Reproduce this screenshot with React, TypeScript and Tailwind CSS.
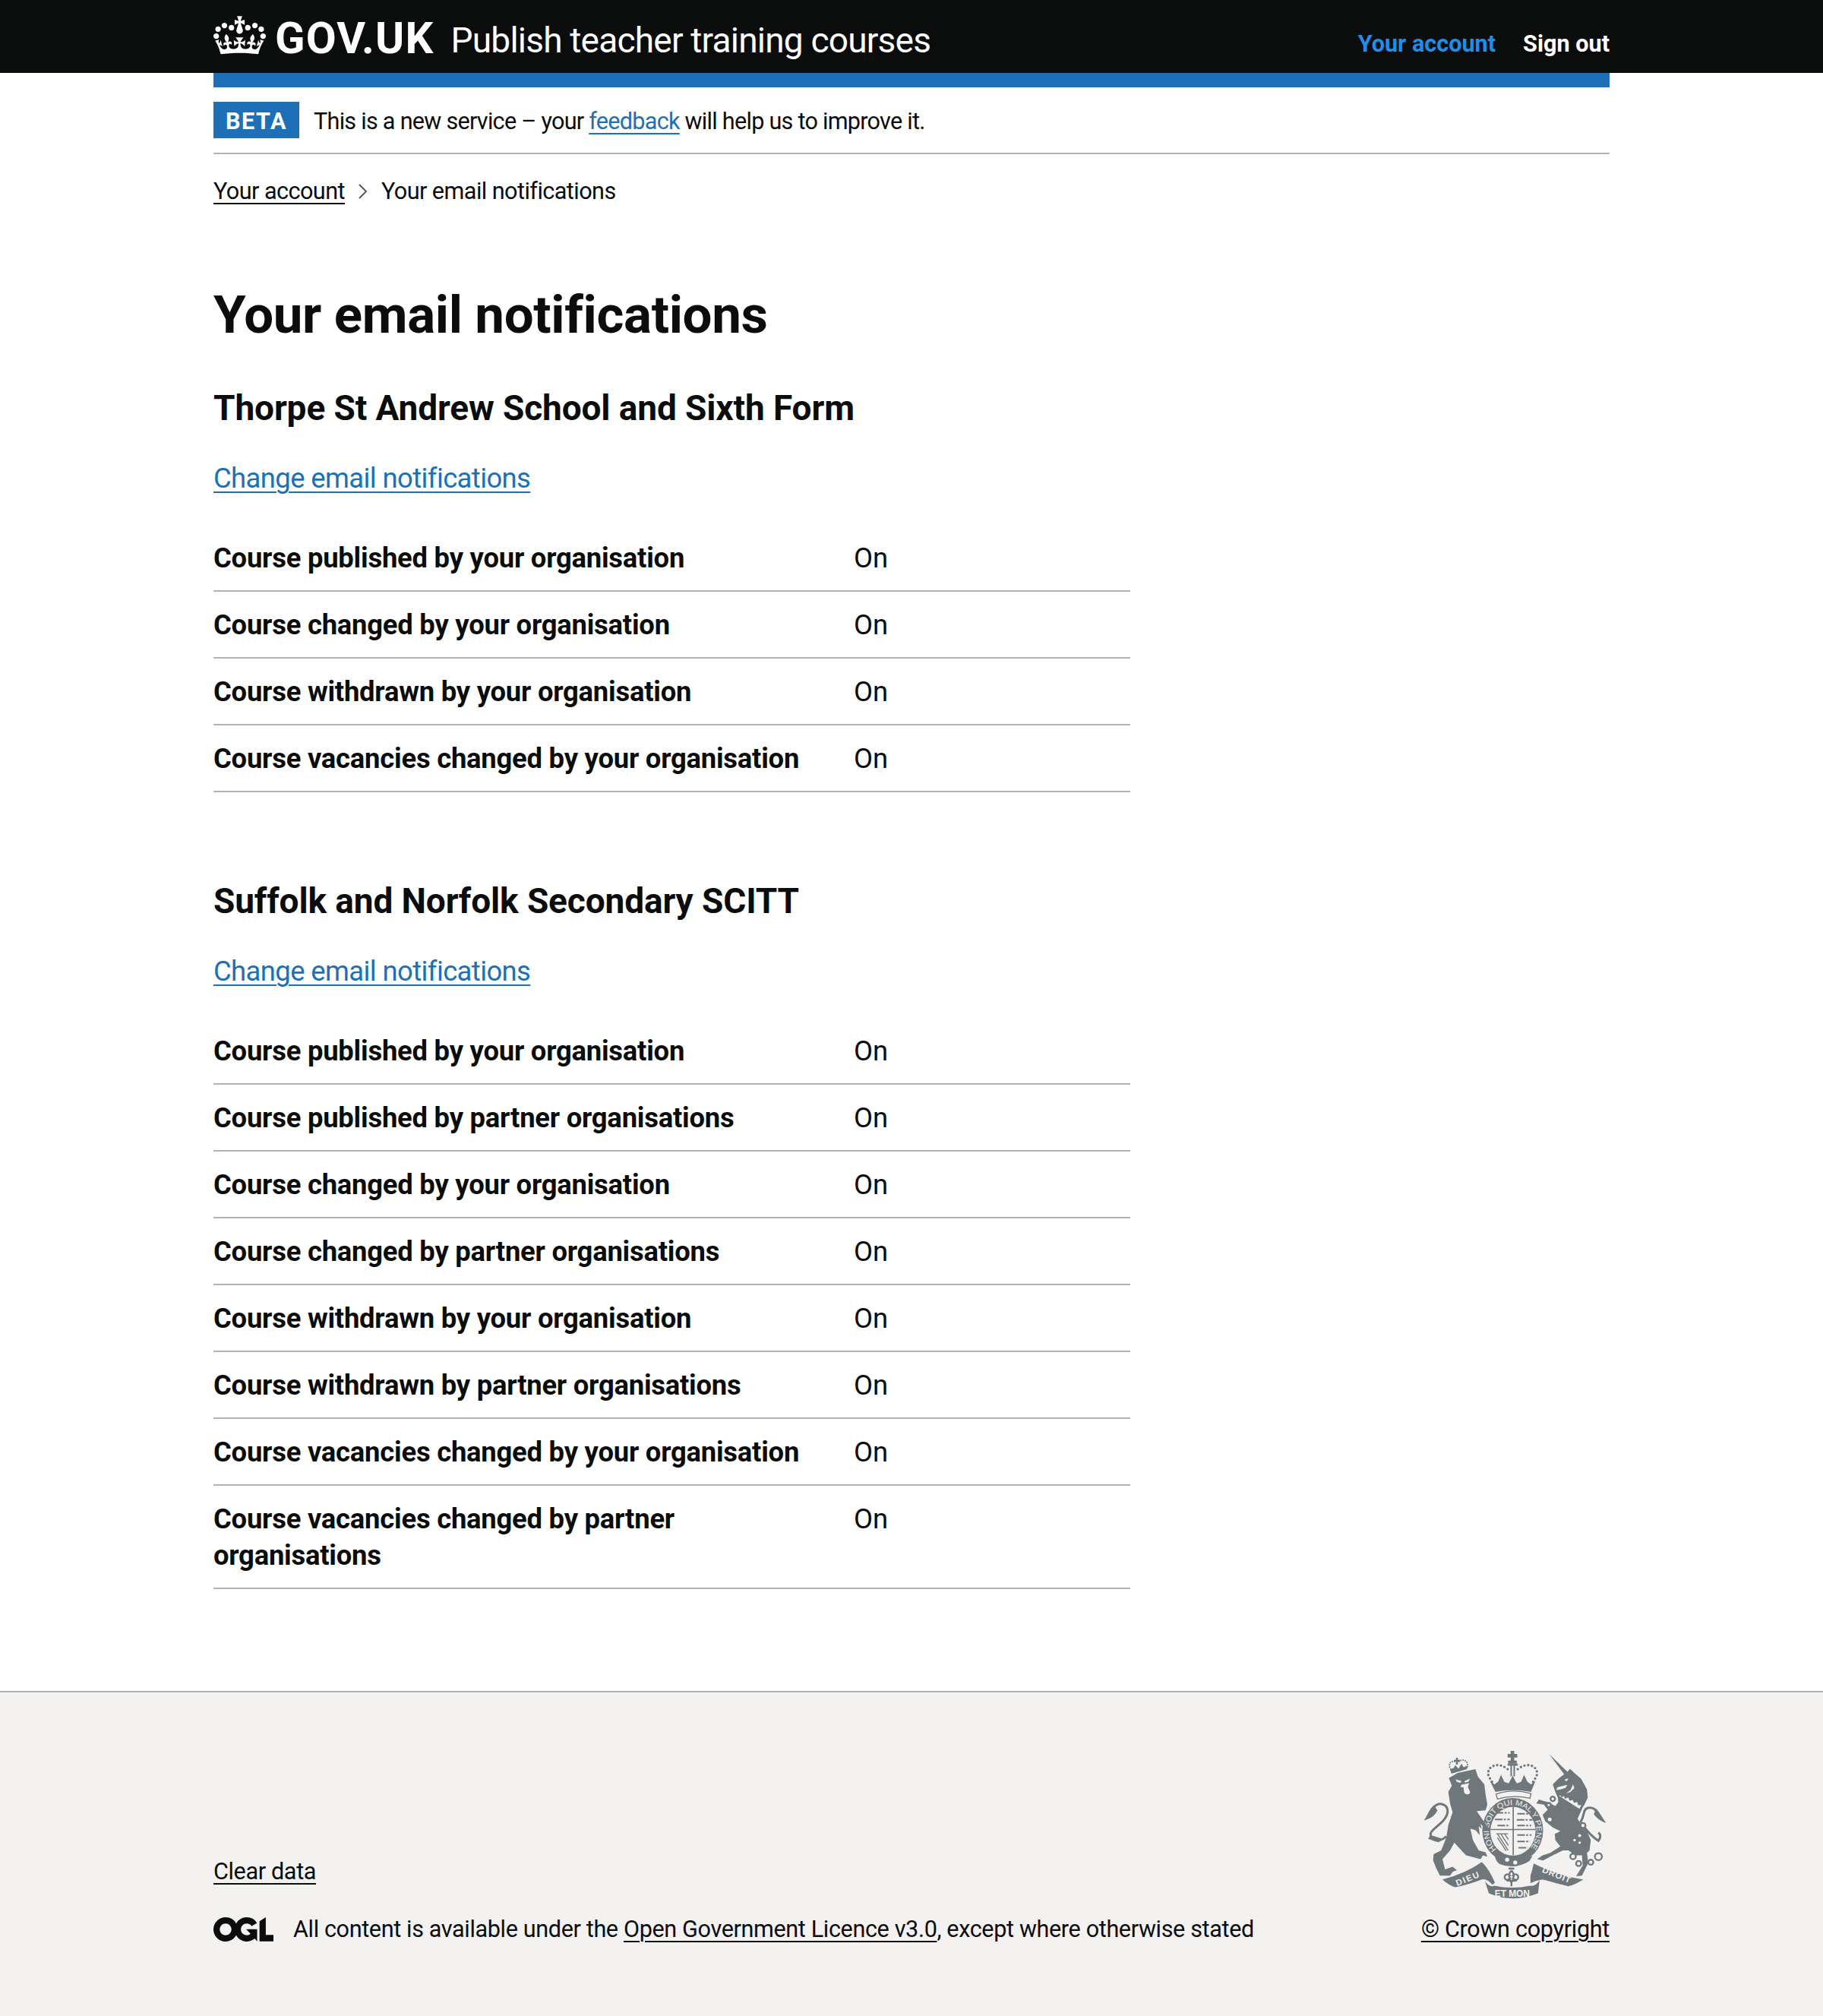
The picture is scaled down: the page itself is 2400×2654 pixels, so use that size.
const font = "font-['Roboto','Liberation_Sans',sans-serif]";

function Crown() {
  return (
    <svg viewBox="0 0 132 97" className="mt-[1px] w-[69px] h-[51px] text-white shrink-0" fill="currentColor">
      <path fillRule="evenodd" d="M25 30.2c3.5 1.5 7.7-.2 9.1-3.7 1.5-3.6-.2-7.8-3.9-9.2-3.6-1.4-7.6.3-9.1 3.9-1.4 3.5.3 7.5 3.9 9zM9 39.5c3.6 1.5 7.8-.2 9.2-3.7 1.5-3.6-.2-7.8-3.9-9.1-3.6-1.5-7.6.2-9.1 3.8-1.4 3.5.3 7.5 3.8 9zM4.4 57.2c3.5 1.5 7.7-.2 9.1-3.8 1.5-3.6-.2-7.7-3.9-9.1-3.5-1.5-7.6.3-9.1 3.8-1.4 3.5.3 7.6 3.9 9.1zm38.3-21.4c3.5 1.5 7.7-.2 9.1-3.8 1.5-3.6-.2-7.7-3.9-9.1-3.6-1.5-7.6.3-9.1 3.8-1.3 3.6.4 7.7 3.9 9.1zm64.4-5.6c-3.6 1.5-7.8-.2-9.1-3.7-1.5-3.6.2-7.8 3.8-9.2 3.6-1.4 7.7.3 9.2 3.9 1.3 3.5-.4 7.5-3.9 9zm15.9 9.3c-3.6 1.5-7.7-.2-9.1-3.7-1.5-3.6.2-7.8 3.7-9.1 3.6-1.5 7.7.2 9.2 3.8 1.5 3.5-.3 7.5-3.8 9zm4.7 17.7c-3.6 1.5-7.8-.2-9.2-3.8-1.5-3.6.2-7.7 3.9-9.1 3.6-1.5 7.7.3 9.2 3.8 1.3 3.5-.4 7.6-3.9 9.1zM89.3 35.8c-3.6 1.5-7.8-.2-9.2-3.8-1.4-3.6.2-7.7 3.9-9.1 3.6-1.5 7.7.3 9.2 3.8 1.4 3.6-.3 7.7-3.9 9.1zM69.7 17.7l8.9 4.7V9.3l-8.9 2.8c-.2-.3-.5-.6-.9-.9L72.4 0H59.6l3.5 11.2c-.3.3-.6.5-.9.9l-8.8-2.8v13.1l8.8-4.7c.3.3.6.7.9.9l-5 15.4v.1c-.2.8-.4 1.6-.4 2.4 0 4.1 3.1 7.5 7 8.1h.2c.3 0 .7.1 1 .1.4 0 .7 0 1-.1h.2c4-.6 7.1-4.1 7.1-8.1 0-.8-.1-1.7-.4-2.4V34l-5.1-15.4c.4-.2.7-.6 1-.9zM66 92.8c16.9 0 32.8 1.1 47.1 3.2 4-16.9 8.9-26.7 14-33.5l-9.6-3.4c1 4.9 1.1 7.2 0 10.2-1.5-1.4-3-4.3-4.2-8.7L108.6 76c2.8-2 5-3.2 7.5-3.3-4.4 9.4-10 11.9-13.6 11.2-4.3-.8-6.3-4.6-5.6-7.9 1-4.7 5.7-5.9 8-.5 4.3-8.7-3-11.4-7.6-8.8 7.1-7.2 7.9-13.5 2.1-21.1-8 6.1-8.1 12.3-4.5 20.8-4.7-5.4-12.1-2.5-9.5 6.2 3.4-5.2 7.9-2 7.2 3.1-.6 4.3-6.4 7.8-13.5 7.2-10.3-.9-10.9-8-11.2-13.8 2.5-.5 7.1 1.8 11 7.3L80.2 60c-4.1 4.4-8 5.3-12.3 5.4 1.4-4.4 8-11.6 8-11.6H55.5s6.4 7.2 7.9 11.6c-4.2-.1-8-1-12.3-5.4l1.4 16.4c3.9-5.5 8.5-7.7 10.9-7.3-.3 5.8-.9 12.8-11.1 13.8-7.2.6-12.9-2.9-13.5-7.2-.7-5 3.8-8.3 7.1-3.1 2.7-8.7-4.6-11.6-9.4-6.2 3.7-8.5 3.6-14.7-4.6-20.8-5.8 7.6-5 13.9 2.2 21.1-4.7-2.6-11.9.1-7.7 8.8 2.3-5.5 7.1-4.2 8.1.5.7 3.3-1.3 7.1-5.7 7.9-3.5.7-9-1.8-13.5-11.2 2.5.1 4.7 1.3 7.5 3.3l-4.7-15.4c-1.2 4.4-2.7 7.2-4.3 8.7-1.1-3-.9-5.3 0-10.2l-9.5 3.4c5 6.9 9.9 16.7 14 33.5 14.8-2.1 30.8-3.2 47.7-3.2z" />
    </svg>
  );
}

function Ogl() {
  return (
    <svg viewBox="0 0 483.2 195.7" className="w-[79px] h-[32px] shrink-0 text-[#0b0c0c]" fill="currentColor">
      <path d="M421.5 142.8V.1l-50.7 32.3v161.1h112.4v-50.7zm-122.3-9.6A47.12 47.12 0 0 1 221 97.8c0-26 21.1-47.1 47.1-47.1 16.7 0 31.4 8.7 39.7 21.8l42.7-27.2A97.63 97.63 0 0 0 268.1 0c-36.5 0-68.3 20.1-85.1 49.7A98 98 0 0 0 97.8 0C43.9 0 0 43.9 0 97.8s43.9 97.8 97.8 97.8c36.5 0 68.3-20.1 85.1-49.7a97.76 97.76 0 0 0 149.6 25.4l19.4 22.2V96.4h-88.3l35.1 36.8zM97.8 145c-26 0-47.1-21.1-47.1-47.1s21.1-47.1 47.1-47.1 47.2 21 47.2 47S123.8 145 97.8 145" />
    </svg>
  );
}

function Crest() {
  const c = "#6f777b";
  const bg = "#f3f2f1";
  return (
    <svg viewBox="100 75 725 590" className="w-[242px] h-[197px] shrink-0">
      <defs>
        <path id="garter-arc" d="M388 466 A94 101 0 1 1 516 466" />
      </defs>
      {/* royal crown */}
      <path fill={c} d="M444 78h14v12h12v14h-12v12h10v12h-34v-12h10v-12h-12v-14h12z" />
      <path fill={c} d="M443 130h6v48h-6zM455 130h6v48h-6zM432 128h40v8h-40z" />
      <path fill="none" stroke={c} strokeWidth="10" strokeLinecap="round" strokeDasharray="0 15" d="M432 150C395 118 345 138 357 178L372 202M472 150C510 118 558 138 546 178L531 202" />
      <path fill={c} d="M362 196L380 210L394 200L406 172L419 200L436 206L452 176L468 206L485 200L497 172L510 200L524 210L542 196L524 240Q452 226 384 240Z" />
      <path fill="none" stroke={c} strokeWidth="4" d="M386 248Q452 226 524 246L520 265Q452 250 392 268Z" />
      {/* garter */}
      <ellipse cx="452" cy="392" rx="120" ry="128" fill={c} />
      <ellipse cx="453" cy="395" rx="89" ry="96" fill={bg} />
      <path fill="none" stroke={c} strokeWidth="5" d="M365 388h176M454 298v192" />
      <g fill="none" stroke={c} strokeWidth="6" strokeDasharray="30 5 8 6">
        <path d="M385 322h55M382 348h58M392 372h48M470 326h60M468 350h62M470 372h55M470 410h56M470 435h50M475 460h36" />
      </g>
      <path fill="none" stroke={c} strokeWidth="4" d="M388 405l46 0M392 405l42 66M405 405l30 46M420 405l15 22M392 420l34 52" />
      <text fontFamily="'Liberation Sans',sans-serif" fontSize="30" fill={bg}>
        <textPath href="#garter-arc" startOffset="0" textLength="460" lengthAdjust="spacingAndGlyphs">HONI SOIT QUI MAL Y PENSE</textPath>
      </text>
      <path fill={c} d="M382 478Q452 524 530 492L518 512Q460 548 400 524Q378 508 382 478Z" />
      <circle cx="430" cy="507" r="8" fill={bg} /><circle cx="462" cy="518" r="8" fill={bg} />
      {/* lion */}
      <path fill={c} d="M200 185L235 165L305 150L315 180L340 210L345 250L352 290L345 312L310 315L362 392L352 395L325 365L330 385L318 375L322 410L305 390L285 385L295 430L318 470L345 478L352 495L335 490L325 505L300 498L268 490L240 460L222 440L205 470L175 505L185 545L215 535L232 548L215 555L205 570L165 570L150 540L138 510L140 485L170 470L190 420L198 370L215 320L205 285L198 240L212 215Z" />
      <path fill="none" stroke={c} strokeWidth="9" d="M190 415C165 440 125 435 128 405C130 385 190 360 195 320C198 290 165 275 140 300" />
      <path fill={c} d="M142 292C120 310 115 335 102 352C125 345 145 335 155 312ZM128 410L118 425L160 438L175 425Z" />
      <path fill={bg} d="M226 190L250 197L246 204L232 200ZM262 197L284 187L277 199L264 203ZM250 211L280 205L275 220L284 240C284 252 264 254 260 240L258 222L246 220Z" />
      <path fill="none" stroke={c} strokeWidth="6" strokeLinecap="round" strokeDasharray="0 9" d="M207 150C195 130 208 112 228 122M240 120C255 105 282 118 272 145" />
      <path fill={c} d="M228 105h8v8h8v7h-8v12h-8v-12h-8v-7h8zM205 150L218 146L226 134L238 148L250 128L258 142L272 136L272 150L210 168Z" />
      {/* unicorn */}
      <path fill={c} d="M595 90L668 160L678 148L695 165L722 188L745 230L748 262L735 290L728 300L708 345L725 375L745 395L760 430L755 470L745 480L750 520L725 570L702 572L728 530L725 490L700 490L672 470L650 470L610 490L572 510L548 505L570 490L600 480L640 455L620 430L618 405L640 395L610 380L580 355L570 330L590 310L575 290L545 285L555 270L590 280L620 295L632 280L630 262L620 240L610 210L635 185L655 170Z" />
      <path fill="none" stroke={c} strokeWidth="9" d="M718 362C725 350 730 340 733 322C738 296 770 295 785 320M722 362C745 395 770 420 790 432C800 420 800 408 790 400" />
      <path fill={c} d="M780 305C795 320 805 340 820 362C800 355 785 345 772 328Z" />
      <g fill={bg} stroke={c} strokeWidth="7">
        <circle cx="610" cy="267" r="9" /><circle cx="594" cy="291" r="8" /><circle cx="598" cy="348" r="11" />
        <circle cx="729" cy="372" r="10" /><circle cx="690" cy="494" r="11" /><circle cx="712" cy="522" r="10" /><circle cx="760" cy="517" r="10" /><circle cx="790" cy="495" r="14" />
      </g>
      <path fill={bg} stroke={c} strokeWidth="5" strokeLinejoin="round" d="M632 256L640 248L646 258L655 252L660 264L672 258L678 272L690 268L695 280L708 276L712 290L727 288L716 310Z" />
      <g fill={bg}>
        <circle cx="716" cy="412" r="6" /><circle cx="696" cy="430" r="5" /><circle cx="716" cy="440" r="5" />
        <path d="M628 222L650 216L668 212L660 224L640 230L624 232ZM655 192L672 186L665 198ZM690 210L695 225L680 240L662 246L680 232Z" />
      </g>
      {/* fleur */}
      <path fill={c} d="M436 538h22v8h-22z" />
      <path fill="none" stroke={c} strokeWidth="7" d="M447 550c-16 15-8 32 0 48M447 550c16 15 8 32 0 48M444 572c-10-15-30-5-22 10 5 8 15 5 22-5M450 572c10-15 30-5 22 10-5 8-15 5-22-5M428 590h40M447 598v14" />
      {/* ribbon */}
      <path fill={c} d="M175 585Q270 560 330 516Q360 545 382 598L372 606Q350 580 330 585Q280 605 225 616Q195 605 175 585Z" />
      <path fill={c} d="M342 590Q360 618 380 610Q450 625 520 610Q545 612 558 588L552 640Q450 680 358 640Z" />
      <path fill={c} d="M522 570Q530 545 535 522Q630 570 730 585Q700 605 672 612Q620 600 570 585Q540 590 522 600Z" />
      <g fontFamily="'Liberation Sans',sans-serif" fontWeight="700" fill={bg} textAnchor="middle">
        <text transform="translate(280 592) rotate(-22)" fontSize="34" letterSpacing="5">DIEU</text>
        <text x="450" y="652" fontSize="36">ET MON</text>
        <text transform="translate(622 578) rotate(22)" fontSize="34" letterSpacing="3">DROIT</text>
      </g>
    </svg>
  );
}

const A = "underline decoration-[2px] underline-offset-[5px]";

function Row({ k }: { k: string }) {
  return (
    <div className="flex border-b-2 border-[#b1b4b6] pt-[20px] pb-[18px] text-[36.4px] leading-[48px]">
      <div className="w-[843px] pr-[19px] font-bold tracking-[-0.006em]">{k}</div>
      <div>On</div>
    </div>
  );
}

function Section({ title, rows }: { title: string; rows: string[] }) {
  return (
    <section>
      <h2 className="text-[46px] leading-[57px] font-bold tracking-[-0.0025em]">{title}</h2>
      <p className="mt-[40px] text-[36.4px] leading-[48px] tracking-[-0.016em]">
        <a className={`text-[#1d70b8] ${A}`}>Change email notifications</a>
      </p>
      <div className="mt-[37px] w-[1207px]">
        {rows.map((r) => <Row key={r} k={r} />)}
      </div>
    </section>
  );
}

export default function App() {
  return (
    <div className={`${font} text-[#0b0c0c] bg-white min-h-[2654px] flex flex-col`}>
      <header className="bg-[#0b0c0c] h-[96px] text-white">
        <div className="mx-[281px] h-full flex items-start justify-between">
          <div className="flex items-start pt-[20px]">
            <Crown />
            <span className="ml-[12px] pt-[4px] text-[58px] leading-[52px] font-bold tracking-[0.02em]">GOV.UK</span>
            <span className="ml-[22px] pt-[7px] text-[46px] leading-[52px] tracking-[-0.017em]">Publish teacher training courses</span>
          </div>
          <nav className="flex gap-[36px] text-[30.6px] leading-[38px] font-bold pt-[39px]">
            <a className="text-[#1d8feb]">Your account</a>
            <a>Sign out</a>
          </nav>
        </div>
      </header>
      <main className="mx-[281px]">
        <div className="h-[19px] bg-[#1d70b8]" />
        <div className="flex items-start border-b-2 border-[#b1b4b6] pt-[19px] pb-[17px] text-[30.6px] leading-[48px]">
          <strong className="w-[113px] h-[48px] leading-[51px] bg-[#1d70b8] text-white text-center tracking-[0.05em] font-bold">BETA</strong>
          <span className="ml-[19px] pt-[2px] tracking-[-0.024em]">This is a new service – your <a className={`text-[#1d70b8] ${A}`}>feedback</a> will help us to improve it.</span>
        </div>
        <nav className="flex items-center mt-[30px] text-[30.6px] leading-[38px] tracking-[-0.018em]">
          <a className={A}>Your account</a>
          <svg viewBox="0 0 14 24" className="w-[14px] h-[24px] mx-[17px]" fill="none" stroke="#505a5f" strokeWidth="2"><path d="M2 3l9 9-9 9" /></svg>
          <span>Your email notifications</span>
        </nav>
        <h1 className="mt-[104px] text-[69px] leading-[80px] font-bold tracking-[-0.005em]">Your email notifications</h1>
        <div className="mt-[54px]">
          <Section title="Thorpe St Andrew School and Sixth Form" rows={[
            "Course published by your organisation",
            "Course changed by your organisation",
            "Course withdrawn by your organisation",
            "Course vacancies changed by your organisation",
          ]} />
        </div>
        <div className="mt-[115px]">
          <Section title="Suffolk and Norfolk Secondary SCITT" rows={[
            "Course published by your organisation",
            "Course published by partner organisations",
            "Course changed by your organisation",
            "Course changed by partner organisations",
            "Course withdrawn by your organisation",
            "Course withdrawn by partner organisations",
            "Course vacancies changed by your organisation",
            "Course vacancies changed by partner organisations",
          ]} />
        </div>
      </main>
      <footer className="mt-[134px] flex-1 bg-[#f3f2f1] border-t-2 border-[#b1b4b6]">
        <div className="mx-[281px] pt-[76px] flex justify-between items-end text-[30.6px] leading-[38px]">
          <div className="tracking-[-0.012em]">
            <a className={A}>Clear data</a>
            <div className="flex items-center mt-[38px]">
              <Ogl />
              <span className="ml-[26px]">All content is available under the <a className={A}>Open Government Licence v3.0</a>, except where otherwise stated</span>
            </div>
          </div>
          <div className="flex flex-col items-center tracking-[-0.01em]">
            <Crest />
            <a className={`mt-[20px] ${A}`}>© Crown copyright</a>
          </div>
        </div>
      </footer>
    </div>
  );
}
